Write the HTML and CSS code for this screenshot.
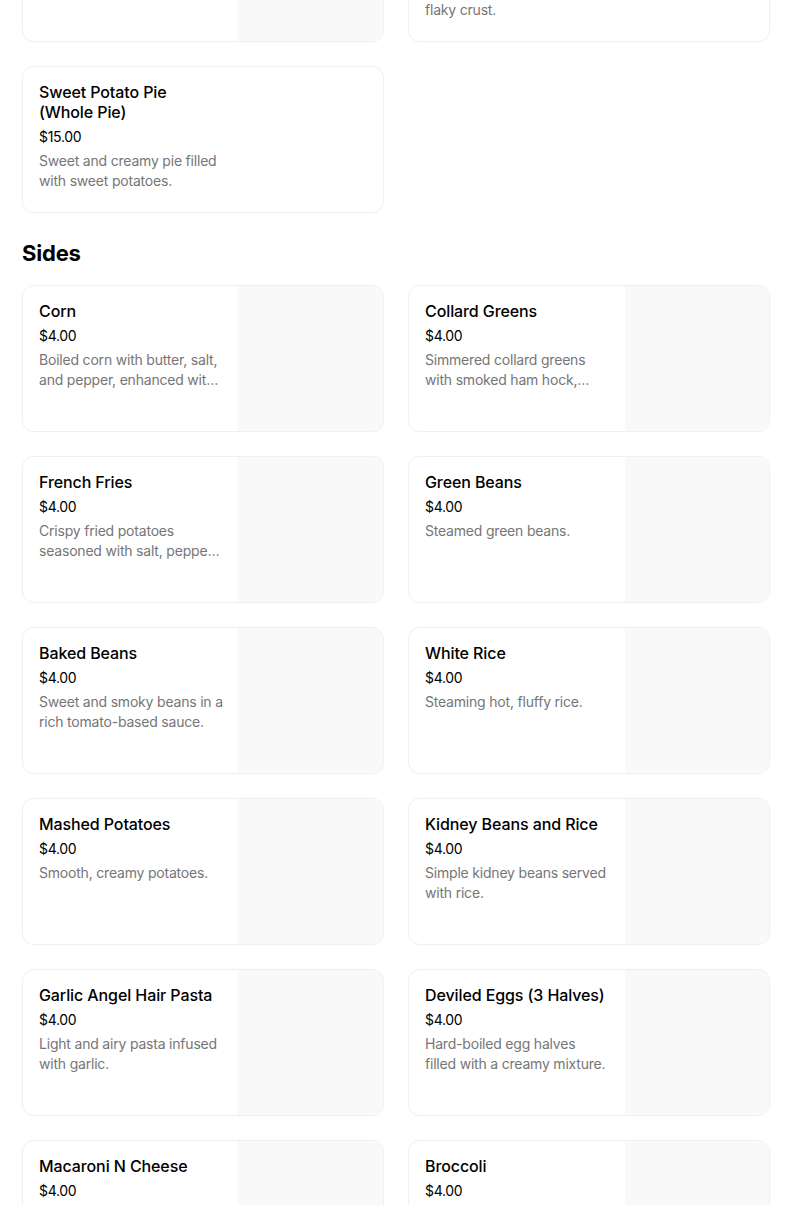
FILE: index.html
```html
<!DOCTYPE html>
<html lang="en">
<head>
<meta charset="utf-8">
<title>Menu</title>
<link rel="stylesheet" href="styles.css">
</head>
<body>
<main class="menu">
  <section class="section">
    <div class="grid">
      <article class="card">
        <div class="info">
          <h3 class="name">Peach Cobbler</h3>
          <p class="price">$6.00</p>
          <p class="desc">Warm baked peaches topped with a sweet, buttery crust.</p>
        </div>
        <div class="thumb"></div>
      </article>
      <article class="card">
        <div class="info">
          <h3 class="name">Sweet Potato Pie (Single Slice)</h3>
          <p class="price">$4.00</p>
          <p class="desc">Sweet potato pie baked in a flaky crust.</p>
        </div>
      </article>
      <article class="card">
        <div class="info">
          <h3 class="name">Sweet Potato Pie (Whole Pie)</h3>
          <p class="price">$15.00</p>
          <p class="desc">Sweet and creamy pie filled with sweet potatoes.</p>
        </div>
      </article>
    </div>
  </section>

  <section class="section">
    <h2 class="section-title">Sides</h2>
    <div class="grid">
      <article class="card">
        <div class="info">
          <h3 class="name">Corn</h3>
          <p class="price">$4.00</p>
          <p class="desc">Boiled corn with butter, salt, and pepper, enhanced with seasoning.</p>
        </div>
        <div class="thumb"></div>
      </article>
      <article class="card">
        <div class="info">
          <h3 class="name">Collard Greens</h3>
          <p class="price">$4.00</p>
          <p class="desc">Simmered collard greens with smoked ham hock, onions and spices.</p>
        </div>
        <div class="thumb"></div>
      </article>
      <article class="card">
        <div class="info">
          <h3 class="name">French Fries</h3>
          <p class="price">$4.00</p>
          <p class="desc">Crispy fried potatoes seasoned with salt, pepper, and garlic.</p>
        </div>
        <div class="thumb"></div>
      </article>
      <article class="card">
        <div class="info">
          <h3 class="name">Green Beans</h3>
          <p class="price">$4.00</p>
          <p class="desc">Steamed green beans.</p>
        </div>
        <div class="thumb"></div>
      </article>
      <article class="card">
        <div class="info">
          <h3 class="name">Baked Beans</h3>
          <p class="price">$4.00</p>
          <p class="desc">Sweet and smoky beans in a rich tomato-based sauce.</p>
        </div>
        <div class="thumb"></div>
      </article>
      <article class="card">
        <div class="info">
          <h3 class="name">White Rice</h3>
          <p class="price">$4.00</p>
          <p class="desc">Steaming hot, fluffy rice.</p>
        </div>
        <div class="thumb"></div>
      </article>
      <article class="card">
        <div class="info">
          <h3 class="name">Mashed Potatoes</h3>
          <p class="price">$4.00</p>
          <p class="desc">Smooth, creamy potatoes.</p>
        </div>
        <div class="thumb"></div>
      </article>
      <article class="card">
        <div class="info">
          <h3 class="name">Kidney Beans and Rice</h3>
          <p class="price">$4.00</p>
          <p class="desc">Simple kidney beans served with rice.</p>
        </div>
        <div class="thumb"></div>
      </article>
      <article class="card">
        <div class="info">
          <h3 class="name">Garlic Angel Hair Pasta</h3>
          <p class="price">$4.00</p>
          <p class="desc">Light and airy pasta infused with garlic.</p>
        </div>
        <div class="thumb"></div>
      </article>
      <article class="card">
        <div class="info">
          <h3 class="name">Deviled Eggs (3 Halves)</h3>
          <p class="price">$4.00</p>
          <p class="desc">Hard-boiled egg halves filled with a creamy mixture.</p>
        </div>
        <div class="thumb"></div>
      </article>
      <article class="card">
        <div class="info">
          <h3 class="name">Macaroni N Cheese</h3>
          <p class="price">$4.00</p>
          <p class="desc">Creamy baked macaroni with cheddar cheese.</p>
        </div>
        <div class="thumb"></div>
      </article>
      <article class="card">
        <div class="info">
          <h3 class="name">Broccoli</h3>
          <p class="price">$4.00</p>
          <p class="desc">Steamed broccoli florets with butter.</p>
        </div>
        <div class="thumb"></div>
      </article>
    </div>
  </section>
</main>
</body>
</html>
```

FILE: styles.css
```css
* { box-sizing: border-box; }

html, body {
  margin: 0;
  padding: 0;
  background: #ffffff;
}

body {
  font-family: Inter, "Noto Sans", "Liberation Sans", sans-serif;
  color: #000000;
  overflow: hidden;
}

.menu {
  width: 748px;
  margin: -105px 0 0 22px;
}

.section-title {
  margin: 24px 0 16px;
  font-size: 22px;
  line-height: 32px;
  font-weight: 700;
  letter-spacing: -0.2px;
}

.grid {
  display: grid;
  grid-template-columns: 1fr 1fr;
  gap: 24px;
}

.card {
  display: flex;
  height: 147px;
  border: 1px solid #f0f0f0;
  border-radius: 12px;
  overflow: hidden;
  background: #ffffff;
  box-shadow: 0 0 3px rgba(0, 0, 0, 0.025);
}

.info {
  width: 216px;
  flex: none;
  padding: 15px 16px 16px 16px;
}

.thumb {
  flex: 1;
  background: #f9f9f9;
}

.grid .card:nth-child(odd) .info {
  width: 215px;
  padding-right: 15px;
}

.name {
  margin: 0;
  font-size: 16px;
  line-height: 20px;
  font-weight: 500;
  letter-spacing: -0.1px;
}

.price {
  margin: 5px 0 0;
  font-size: 14px;
  line-height: 20px;
  font-weight: 400;
  letter-spacing: -0.3px;
}

.desc {
  margin: 4px 0 0;
  font-size: 14px;
  line-height: 20px;
  color: #767676;
  font-weight: 400;
  letter-spacing: -0.2px;
  display: -webkit-box;
  -webkit-line-clamp: 2;
  -webkit-box-orient: vertical;
  overflow: hidden;
}
```
